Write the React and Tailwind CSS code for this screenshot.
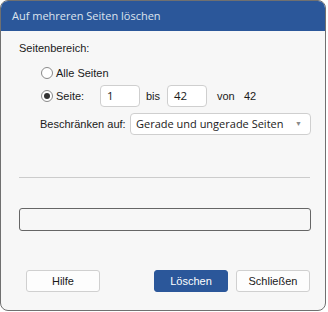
import React from "react";

const lab = { fontFamily: '"Liberation Sans", Arial, sans-serif' };
const seg = { fontFamily: '"Open Sans", "Noto Sans", sans-serif' };

function Radio({ checked }) {
  return (
    <span className="w-[12px] h-[12px] rounded-full border border-[#8a8a8a] bg-white flex items-center justify-center shrink-0">
      {checked && <span className="w-[6px] h-[6px] rounded-full bg-[#333]" />}
    </span>
  );
}

function Field({ value, w }) {
  return (
    <div
      className={`${w} h-[22px] bg-white border border-[#cfcfcf] rounded-[4px] flex items-center pl-[6px] text-[11.5px] text-[#1a1a1a]`}
      style={seg}
    >
      {value}
    </div>
  );
}

function Btn({ children, primary, w = "w-[74px]" }) {
  return (
    <div
      className={`${w} h-[22px] rounded-[3px] flex items-center justify-center text-[11px] ${
        primary
          ? "bg-[#2b579a] text-white border border-[#2b579a]"
          : "bg-[#fdfdfd] text-[#1a1a1a] border border-[#d0d0d0]"
      }`}
      style={lab}
    >
      {children}
    </div>
  );
}

export default function App() {
  return (
    <div className="w-[328px] h-[312px] bg-white">
      <div className="w-[326px] h-[311px] border border-[#707070] rounded-[8px] overflow-hidden bg-[#f7f7f7] flex flex-col">
        <div
          className="h-[30px] bg-[#2b579a] flex items-center pl-[11px] text-[11px] text-[#dde4ee] shrink-0 whitespace-nowrap"
          style={seg}
        >
          Auf mehreren Seiten löschen
        </div>
        <div className="flex flex-col pl-[18px] text-[11px] text-[#1a1a1a]" style={lab}>
          <div className="mt-[10px] h-[14px] leading-[14px]">Seitenbereich:</div>
          <div className="mt-[10px] h-[16px] flex items-center pl-[22px]">
            <Radio />
            <span className="ml-[3px]">Alle Seiten</span>
          </div>
          <div className="mt-[4px] h-[22px] flex items-center pl-[22px]">
            <Radio checked />
            <span className="ml-[3px] w-[44px]">Seite:</span>
            <Field value="1" w="w-[40px]" />
            <span className="w-[27px] pl-[6px]">bis</span>
            <Field value="42" w="w-[40px]" />
            <span className="w-[37px] pl-[10px]">von</span>
            <span>42</span>
          </div>
          <div className="mt-[6px] h-[22px] flex items-center pl-[21px]">
            <span className="w-[90px] whitespace-nowrap">Beschränken auf:</span>
            <div
              className="w-[181px] h-[22px] bg-white border border-[#cfcfcf] rounded-[4px] flex items-center pl-[5px] pr-[8px] text-[11px] whitespace-nowrap"
              style={seg}
            >
              <span className="flex-1">Gerade und ungerade Seiten</span>
              <span className="text-[7px] text-[#8a8a8a]">▼</span>
            </div>
          </div>
          <div className="mt-[42px] h-[1px] w-[291px] bg-[#cccccc]" />
          <div className="mt-[30px] h-[23px] w-[292px] border border-[#666666] rounded-[3px]" />
          <div className="mt-[39px] flex items-center">
            <div className="ml-[7px]">
              <Btn>Hilfe</Btn>
            </div>
            <div className="ml-[54px]">
              <Btn primary>Löschen</Btn>
            </div>
            <div className="ml-[8px]">
              <Btn>Schließen</Btn>
            </div>
          </div>
        </div>
      </div>
    </div>
  );
}
